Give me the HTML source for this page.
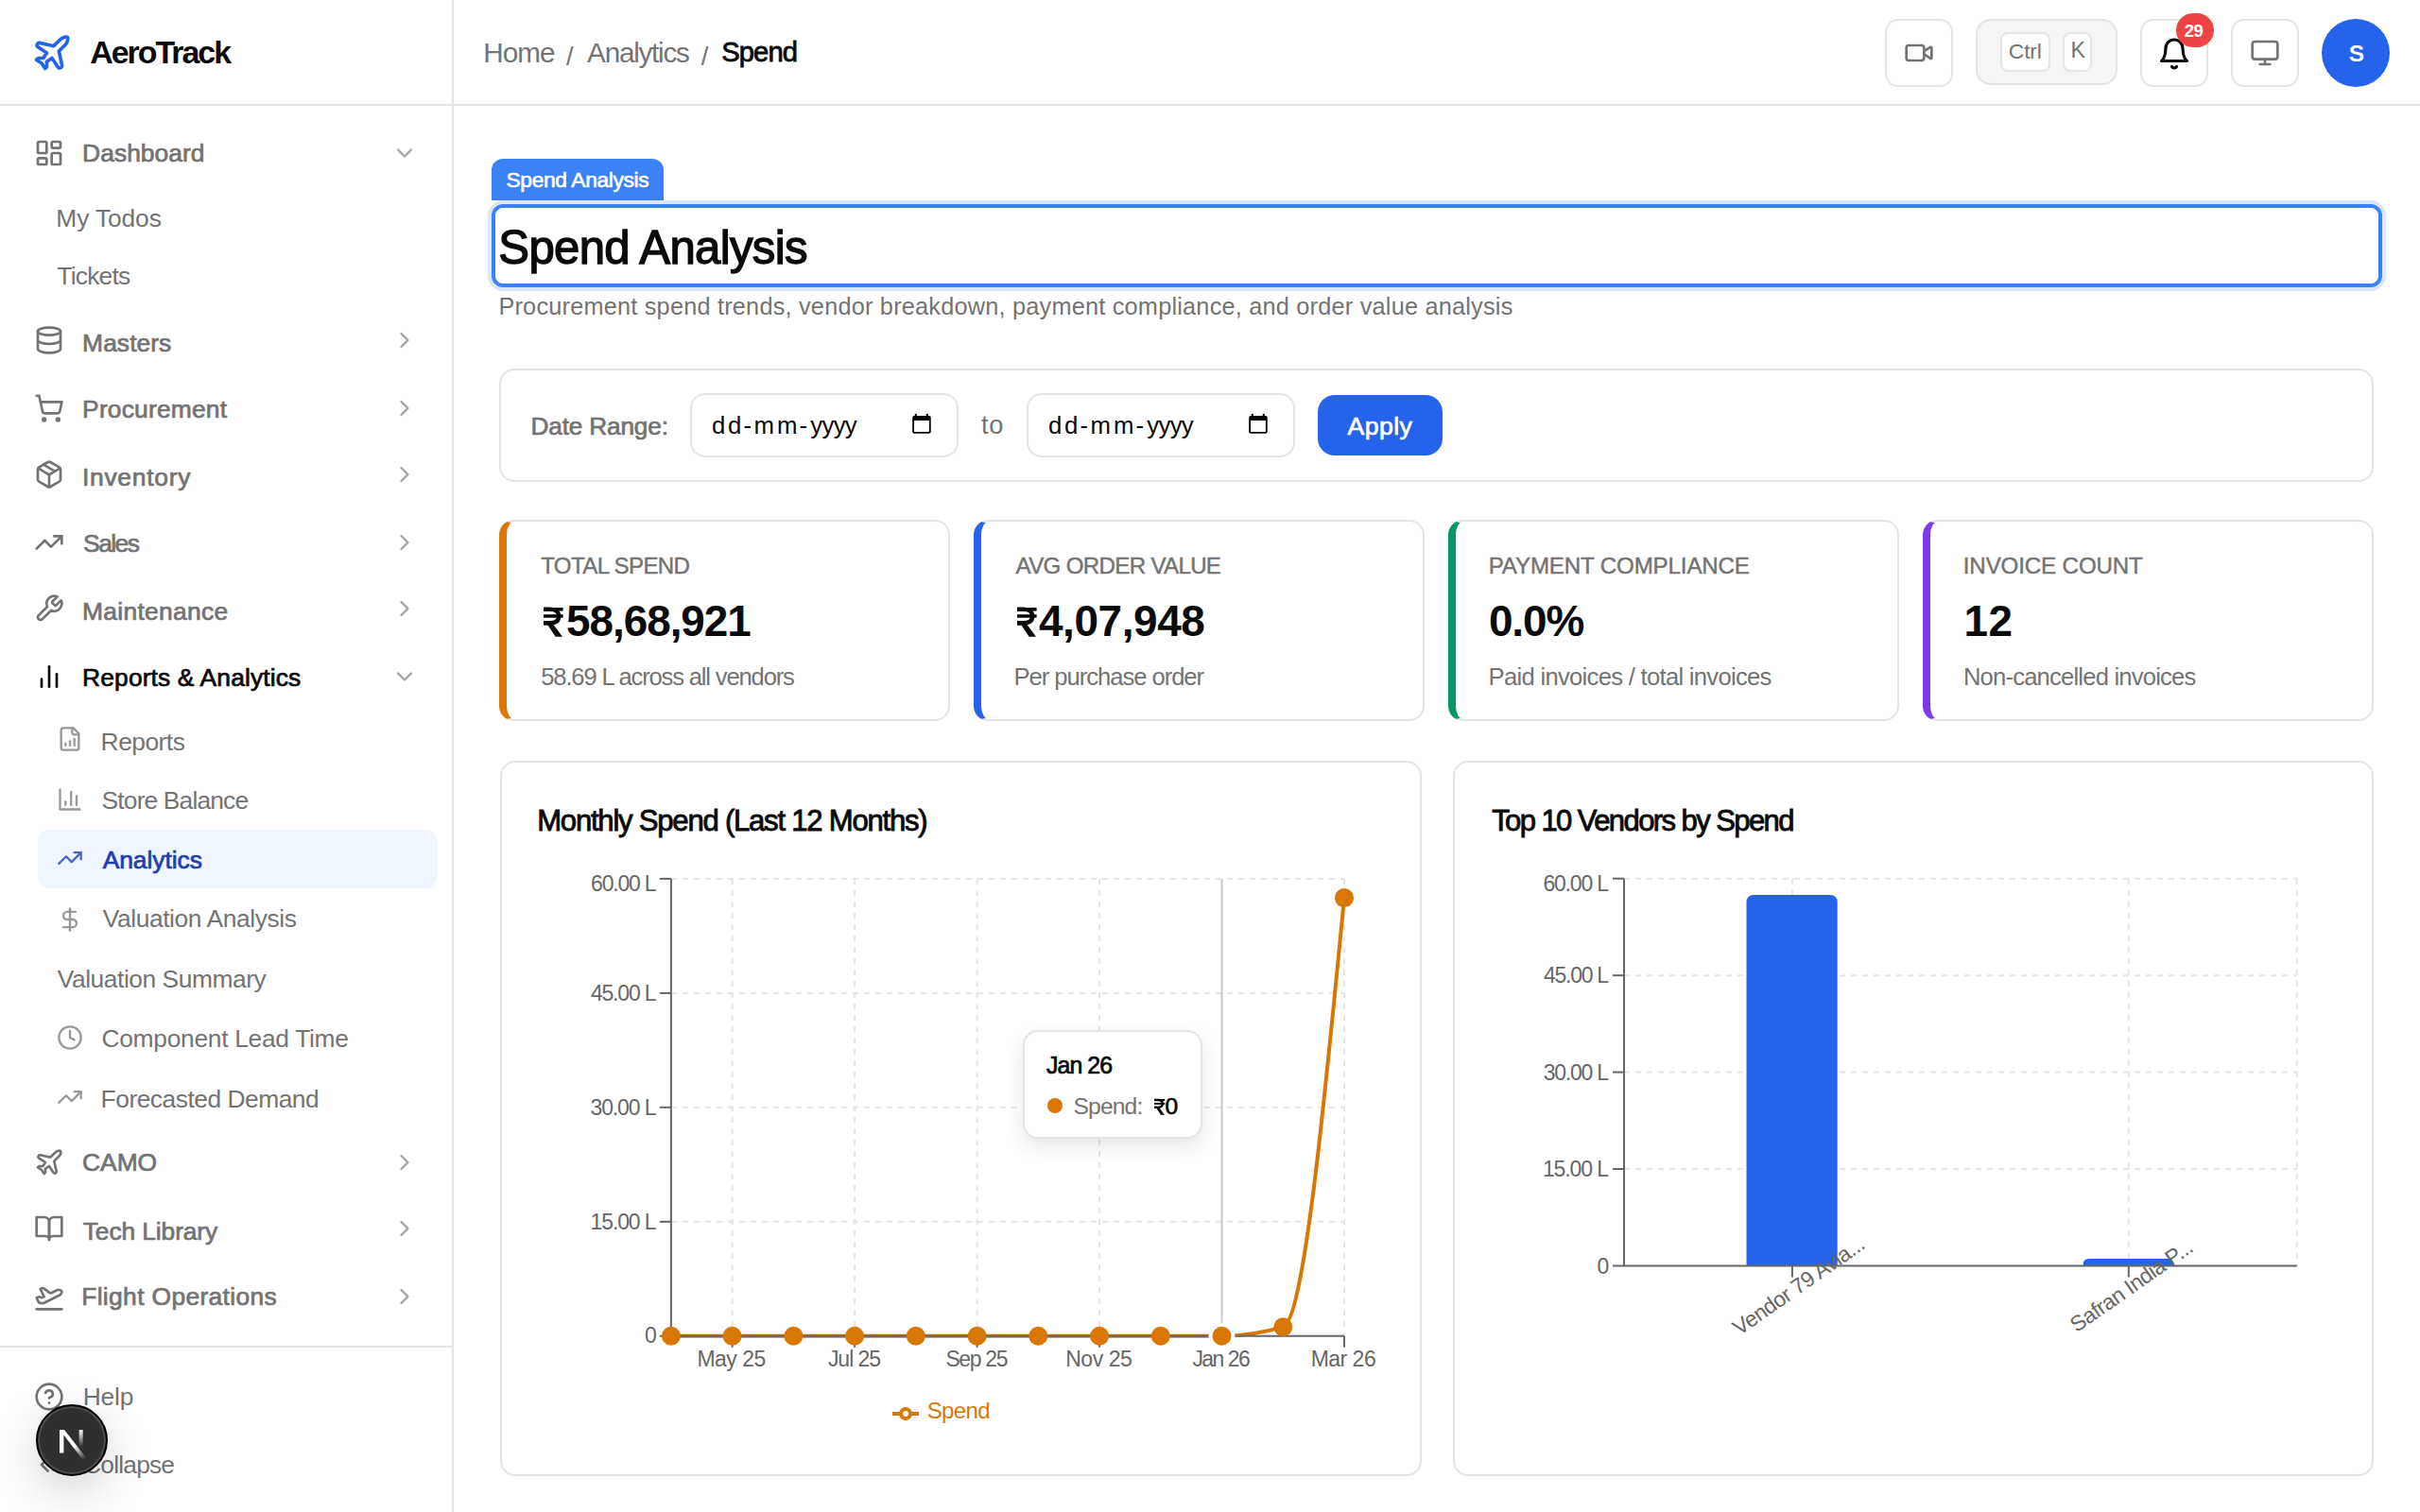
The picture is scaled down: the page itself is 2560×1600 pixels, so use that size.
<!DOCTYPE html><html><head><meta charset="utf-8"><title>Spend Analysis</title><style>
html,body{margin:0;padding:0;background:#fff;}
body{width:2560px;height:1600px;position:relative;overflow:hidden;font-family:"Liberation Sans",sans-serif;}
.t{position:absolute;white-space:nowrap;}
svg{display:block}
</style></head><body>
<div style="position:absolute;left:478px;top:0px;width:2px;height:1600px;box-sizing:border-box;background:#e5e5e5"></div>
<div style="position:absolute;left:0px;top:110px;width:2560px;height:2px;box-sizing:border-box;background:#e5e5e5"></div>
<div style="position:absolute;left:0px;top:1424px;width:478px;height:2px;box-sizing:border-box;background:#e5e5e5"></div>
<svg style="position:absolute;left:32.5px;top:34.2px;" width="44" height="44" viewBox="0 0 24 24" fill="none" stroke="#2563eb" stroke-width="2" stroke-linecap="round" stroke-linejoin="round"><path d="M17.8 19.2 16 11l3.5-3.5C21 6 21.5 4 21 3c-1-.5-3 0-4.5 1.5L13 8 4.8 6.2c-.5-.1-.9.1-1.1.5l-.3.5c-.2.5-.1 1 .3 1.3L9 12l-2 3H4l-1 1 3 2 2 3 1-1v-3l3-2 3.5 5.3c.3.4.8.5 1.3.3l.5-.2c.4-.3.6-.7.5-1.2z"/></svg>
<div class="t" style="left:95.2px;top:39.3px;font-size:33.9px;line-height:33.9px;letter-spacing:-1.99px;color:#0a0a0a;font-weight:700;">AeroTrack</div>
<div class="t" style="left:511.3px;top:40.9px;font-size:29.7px;line-height:29.7px;letter-spacing:-1.01px;color:#737373;">Home</div>
<div class="t" style="left:598.9px;top:46.0px;font-size:27.2px;line-height:27.2px;letter-spacing:0.00px;color:#737373;">/</div>
<div class="t" style="left:621.1px;top:40.9px;font-size:29.7px;line-height:29.7px;letter-spacing:-1.25px;color:#737373;">Analytics</div>
<div class="t" style="left:741.7px;top:46.0px;font-size:27.2px;line-height:27.2px;letter-spacing:0.00px;color:#737373;">/</div>
<div class="t" style="left:763.2px;top:41.3px;font-size:29.2px;line-height:29.2px;letter-spacing:-0.90px;color:#0a0a0a;-webkit-text-stroke:0.82px #0a0a0a;">Spend</div>
<div style="position:absolute;left:1994px;top:20px;width:72px;height:72px;box-sizing:border-box;border:2px solid #e5e5e5;border-radius:14px;background:#fff"></div>
<svg style="position:absolute;left:2014px;top:40px;" width="32" height="32" viewBox="0 0 24 24" fill="none" stroke="#737373" stroke-width="2" stroke-linecap="round" stroke-linejoin="round"><path d="m16 13 5.223 3.482a.5.5 0 0 0 .777-.416V7.87a.5.5 0 0 0-.752-.432L16 10.5"/><rect x="2" y="6" width="14" height="12" rx="2"/></svg>
<div style="position:absolute;left:2090px;top:20px;width:150px;height:70px;box-sizing:border-box;border:2px solid #e5e5e5;border-radius:16px;background:#f5f5f5"></div>
<div style="position:absolute;left:2116px;top:34px;width:53px;height:42px;box-sizing:border-box;border:2px solid #e5e5e5;border-radius:8px;background:#fff"></div>
<div style="position:absolute;left:2182px;top:34px;width:31px;height:42px;box-sizing:border-box;border:2px solid #e5e5e5;border-radius:8px;background:#fff"></div>
<div class="t" style="left:2124.8px;top:42.5px;font-size:22.9px;line-height:22.9px;letter-spacing:-0.20px;color:#737373;">Ctrl</div>
<div class="t" style="left:2190.6px;top:42.2px;font-size:23.3px;line-height:23.3px;letter-spacing:0.00px;color:#737373;">K</div>
<div style="position:absolute;left:2264px;top:20px;width:72px;height:72px;box-sizing:border-box;border:2px solid #e5e5e5;border-radius:14px;background:#fff"></div>
<svg style="position:absolute;left:2282px;top:38.5px;" width="36" height="36" viewBox="0 0 24 24" fill="none" stroke="#0a0a0a" stroke-width="2.1" stroke-linecap="round" stroke-linejoin="round"><path d="M6 8a6 6 0 0 1 12 0c0 7 3 9 3 9H3s3-2 3-9"/><path d="M10.3 21a1.94 1.94 0 0 0 3.4 0"/></svg>
<div style="position:absolute;left:2302px;top:14px;width:40px;height:36px;box-sizing:border-box;background:#ef4444;border-radius:18px"></div>
<div class="t" style="left:2310.8px;top:24.1px;font-size:18.5px;line-height:18.5px;letter-spacing:-0.50px;color:#fff;font-weight:700;">29</div>
<div style="position:absolute;left:2360px;top:20px;width:72px;height:72px;box-sizing:border-box;border:2px solid #e5e5e5;border-radius:14px;background:#fff"></div>
<svg style="position:absolute;left:2380px;top:40px;" width="32" height="32" viewBox="0 0 24 24" fill="none" stroke="#737373" stroke-width="2" stroke-linecap="round" stroke-linejoin="round"><rect width="20" height="14" x="2" y="3" rx="2"/><line x1="8" x2="16" y1="21" y2="21"/><line x1="12" x2="12" y1="17" y2="21"/></svg>
<div style="position:absolute;left:2456px;top:20px;width:72px;height:72px;box-sizing:border-box;background:#2563eb;border-radius:50%"></div>
<div class="t" style="left:2484.8px;top:45.0px;font-size:24.5px;line-height:24.5px;letter-spacing:0.00px;color:#fff;font-weight:700;">S</div>
<svg style="position:absolute;left:36px;top:145.9px;" width="32" height="32" viewBox="0 0 24 24" fill="none" stroke="#737373" stroke-width="2" stroke-linecap="round" stroke-linejoin="round"><rect width="7" height="9" x="3" y="3" rx="1"/><rect width="7" height="5" x="14" y="3" rx="1"/><rect width="7" height="9" x="14" y="12" rx="1"/><rect width="7" height="5" x="3" y="16" rx="1"/></svg>
<div class="t" style="left:87.1px;top:149.4px;font-size:26.4px;line-height:26.4px;letter-spacing:0.04px;color:#737373;-webkit-text-stroke:0.74px #737373;">Dashboard</div>
<svg style="position:absolute;left:414px;top:147.9px;" width="28" height="28" viewBox="0 0 24 24" fill="none" stroke="#a3a3a3" stroke-width="2" stroke-linecap="round" stroke-linejoin="round"><path d="m6 9 6 6 6-6"/></svg>
<div class="t" style="left:59.3px;top:217.6px;font-size:26.4px;line-height:26.4px;letter-spacing:-0.13px;color:#737373;">My Todos</div>
<div class="t" style="left:60.3px;top:279.1px;font-size:26.4px;line-height:26.4px;letter-spacing:-0.78px;color:#737373;">Tickets</div>
<svg style="position:absolute;left:36px;top:343.9px;" width="32" height="32" viewBox="0 0 24 24" fill="none" stroke="#737373" stroke-width="2" stroke-linecap="round" stroke-linejoin="round"><ellipse cx="12" cy="5" rx="9" ry="3"/><path d="M3 5V19A9 3 0 0 0 21 19V5"/><path d="M3 12A9 3 0 0 0 21 12"/></svg>
<div class="t" style="left:87.1px;top:349.8px;font-size:26.4px;line-height:26.4px;letter-spacing:0.06px;color:#737373;-webkit-text-stroke:0.74px #737373;">Masters</div>
<svg style="position:absolute;left:414px;top:345.9px;" width="28" height="28" viewBox="0 0 24 24" fill="none" stroke="#a3a3a3" stroke-width="2" stroke-linecap="round" stroke-linejoin="round"><path d="m9 18 6-6-6-6"/></svg>
<svg style="position:absolute;left:36px;top:416.3px;" width="32" height="32" viewBox="0 0 24 24" fill="none" stroke="#737373" stroke-width="2" stroke-linecap="round" stroke-linejoin="round"><circle cx="8" cy="21" r="1"/><circle cx="19" cy="21" r="1"/><path d="M2.05 2.05h2l2.66 12.42a2 2 0 0 0 2 1.58h9.78a2 2 0 0 0 1.95-1.57l1.65-7.43H5.12"/></svg>
<div class="t" style="left:87.1px;top:419.8px;font-size:26.4px;line-height:26.4px;letter-spacing:0.19px;color:#737373;-webkit-text-stroke:0.74px #737373;">Procurement</div>
<svg style="position:absolute;left:414px;top:418.3px;" width="28" height="28" viewBox="0 0 24 24" fill="none" stroke="#a3a3a3" stroke-width="2" stroke-linecap="round" stroke-linejoin="round"><path d="m9 18 6-6-6-6"/></svg>
<svg style="position:absolute;left:36px;top:485.8px;" width="32" height="32" viewBox="0 0 24 24" fill="none" stroke="#737373" stroke-width="2" stroke-linecap="round" stroke-linejoin="round"><path d="M11 21.73a2 2 0 0 0 2 0l7-4A2 2 0 0 0 21 16V8a2 2 0 0 0-1-1.73l-7-4a2 2 0 0 0-2 0l-7 4A2 2 0 0 0 3 8v8a2 2 0 0 0 1 1.73z"/><path d="M12 22V12"/><path d="m3.3 7 7.703 4.734a2 2 0 0 0 1.994 0L20.7 7"/><path d="m7.5 4.27 9 5.15"/></svg>
<div class="t" style="left:86.9px;top:491.7px;font-size:26.4px;line-height:26.4px;letter-spacing:0.75px;color:#737373;-webkit-text-stroke:0.74px #737373;">Inventory</div>
<svg style="position:absolute;left:414px;top:487.8px;" width="28" height="28" viewBox="0 0 24 24" fill="none" stroke="#a3a3a3" stroke-width="2" stroke-linecap="round" stroke-linejoin="round"><path d="m9 18 6-6-6-6"/></svg>
<svg style="position:absolute;left:36px;top:558.2px;" width="32" height="32" viewBox="0 0 24 24" fill="none" stroke="#737373" stroke-width="2" stroke-linecap="round" stroke-linejoin="round"><polyline points="22 7 13.5 15.5 8.5 10.5 2 17"/><polyline points="16 7 22 7 22 13"/></svg>
<div class="t" style="left:88.1px;top:561.9px;font-size:26.4px;line-height:26.4px;letter-spacing:-1.57px;color:#737373;-webkit-text-stroke:0.74px #737373;">Sales</div>
<svg style="position:absolute;left:414px;top:560.2px;" width="28" height="28" viewBox="0 0 24 24" fill="none" stroke="#a3a3a3" stroke-width="2" stroke-linecap="round" stroke-linejoin="round"><path d="m9 18 6-6-6-6"/></svg>
<svg style="position:absolute;left:36px;top:627.5px;" width="32" height="32" viewBox="0 0 24 24" fill="none" stroke="#737373" stroke-width="2" stroke-linecap="round" stroke-linejoin="round"><path d="M14.7 6.3a1 1 0 0 0 0 1.4l1.6 1.6a1 1 0 0 0 1.4 0l3.77-3.77a6 6 0 0 1-7.94 7.94l-6.91 6.91a2.12 2.12 0 0 1-3-3l6.91-6.91a6 6 0 0 1 7.94-7.94l-3.76 3.76z"/></svg>
<div class="t" style="left:87.1px;top:634.1px;font-size:26.4px;line-height:26.4px;letter-spacing:0.29px;color:#737373;-webkit-text-stroke:0.74px #737373;">Maintenance</div>
<svg style="position:absolute;left:414px;top:629.5px;" width="28" height="28" viewBox="0 0 24 24" fill="none" stroke="#a3a3a3" stroke-width="2" stroke-linecap="round" stroke-linejoin="round"><path d="m9 18 6-6-6-6"/></svg>
<svg style="position:absolute;left:36px;top:700.1px;" width="32" height="32" viewBox="0 0 24 24" fill="none" stroke="#0a0a0a" stroke-width="2" stroke-linecap="round" stroke-linejoin="round"><line x1="18" x2="18" y1="20" y2="10"/><line x1="12" x2="12" y1="20" y2="4"/><line x1="6" x2="6" y1="20" y2="14"/></svg>
<div class="t" style="left:87.1px;top:704.2px;font-size:26.4px;line-height:26.4px;letter-spacing:0.13px;color:#0a0a0a;-webkit-text-stroke:0.74px #0a0a0a;">Reports &amp; Analytics</div>
<svg style="position:absolute;left:414px;top:702.1px;" width="28" height="28" viewBox="0 0 24 24" fill="none" stroke="#a3a3a3" stroke-width="2" stroke-linecap="round" stroke-linejoin="round"><path d="m6 9 6 6 6-6"/></svg>
<svg style="position:absolute;left:60px;top:767.8px;" width="28" height="28" viewBox="0 0 24 24" fill="none" stroke="#999999" stroke-width="2" stroke-linecap="round" stroke-linejoin="round"><path d="M15 2H6a2 2 0 0 0-2 2v16a2 2 0 0 0 2 2h12a2 2 0 0 0 2-2V7Z"/><path d="M14 2v4a2 2 0 0 0 2 2h4"/><path d="M8 18v-2"/><path d="M12 18v-4"/><path d="M16 18v-6"/></svg>
<div class="t" style="left:106.6px;top:772.0px;font-size:26.4px;line-height:26.4px;letter-spacing:-0.52px;color:#737373;">Reports</div>
<svg style="position:absolute;left:60px;top:832.3px;" width="28" height="28" viewBox="0 0 24 24" fill="none" stroke="#999999" stroke-width="2" stroke-linecap="round" stroke-linejoin="round"><path d="M3 3v18h18"/><path d="M18 17V9"/><path d="M13 17V5"/><path d="M8 17v-3"/></svg>
<div class="t" style="left:107.6px;top:833.6px;font-size:26.4px;line-height:26.4px;letter-spacing:-0.86px;color:#737373;">Store Balance</div>
<div style="position:absolute;left:40px;top:878px;width:422px;height:62px;box-sizing:border-box;background:#eff6ff;border-radius:12px"></div>
<svg style="position:absolute;left:60px;top:893.9px;" width="28" height="28" viewBox="0 0 24 24" fill="none" stroke="#4666cc" stroke-width="2" stroke-linecap="round" stroke-linejoin="round"><polyline points="22 7 13.5 15.5 8.5 10.5 2 17"/><polyline points="16 7 22 7 22 13"/></svg>
<div class="t" style="left:108.7px;top:897.4px;font-size:26.4px;line-height:26.4px;letter-spacing:-0.05px;color:#1e40af;-webkit-text-stroke:0.74px #1e40af;">Analytics</div>
<svg style="position:absolute;left:60px;top:959px;" width="28" height="28" viewBox="0 0 24 24" fill="none" stroke="#999999" stroke-width="2" stroke-linecap="round" stroke-linejoin="round"><line x1="12" x2="12" y1="2" y2="22"/><path d="M17 5H9.5a3.5 3.5 0 0 0 0 7h5a3.5 3.5 0 0 1 0 7H6"/></svg>
<div class="t" style="left:108.7px;top:959.3px;font-size:26.4px;line-height:26.4px;letter-spacing:-0.41px;color:#737373;">Valuation Analysis</div>
<div class="t" style="left:60.8px;top:1023.4px;font-size:26.4px;line-height:26.4px;letter-spacing:-0.46px;color:#737373;">Valuation Summary</div>
<svg style="position:absolute;left:60px;top:1083.8px;" width="28" height="28" viewBox="0 0 24 24" fill="none" stroke="#999999" stroke-width="2" stroke-linecap="round" stroke-linejoin="round"><circle cx="12" cy="12" r="10"/><polyline points="12 6 12 12 16 14"/></svg>
<div class="t" style="left:107.5px;top:1085.6px;font-size:26.4px;line-height:26.4px;letter-spacing:-0.31px;color:#737373;">Component Lead Time</div>
<svg style="position:absolute;left:60px;top:1146.9px;" width="28" height="28" viewBox="0 0 24 24" fill="none" stroke="#999999" stroke-width="2" stroke-linecap="round" stroke-linejoin="round"><polyline points="22 7 13.5 15.5 8.5 10.5 2 17"/><polyline points="16 7 22 7 22 13"/></svg>
<div class="t" style="left:106.6px;top:1149.6px;font-size:26.4px;line-height:26.4px;letter-spacing:-0.50px;color:#737373;">Forecasted Demand</div>
<svg style="position:absolute;left:36px;top:1213.7px;" width="32" height="32" viewBox="0 0 24 24" fill="none" stroke="#737373" stroke-width="2" stroke-linecap="round" stroke-linejoin="round"><path d="M17.8 19.2 16 11l3.5-3.5C21 6 21.5 4 21 3c-1-.5-3 0-4.5 1.5L13 8 4.8 6.2c-.5-.1-.9.1-1.1.5l-.3.5c-.2.5-.1 1 .3 1.3L9 12l-2 3H4l-1 1 3 2 2 3 1-1v-3l3-2 3.5 5.3c.3.4.8.5 1.3.3l.5-.2c.4-.3.6-.7.5-1.2z"/></svg>
<div class="t" style="left:87.1px;top:1217.4px;font-size:26.4px;line-height:26.4px;letter-spacing:-0.04px;color:#737373;-webkit-text-stroke:0.74px #737373;">CAMO</div>
<svg style="position:absolute;left:414px;top:1215.7px;" width="28" height="28" viewBox="0 0 24 24" fill="none" stroke="#a3a3a3" stroke-width="2" stroke-linecap="round" stroke-linejoin="round"><path d="m9 18 6-6-6-6"/></svg>
<svg style="position:absolute;left:36px;top:1284.1px;" width="32" height="32" viewBox="0 0 24 24" fill="none" stroke="#737373" stroke-width="2" stroke-linecap="round" stroke-linejoin="round"><path d="M2 3h6a4 4 0 0 1 4 4v14a3 3 0 0 0-3-3H2z"/><path d="M22 3h-6a4 4 0 0 0-4 4v14a3 3 0 0 1 3-3h7z"/></svg>
<div class="t" style="left:87.8px;top:1289.5px;font-size:26.4px;line-height:26.4px;letter-spacing:-0.12px;color:#737373;-webkit-text-stroke:0.74px #737373;">Tech Library</div>
<svg style="position:absolute;left:414px;top:1286.1px;" width="28" height="28" viewBox="0 0 24 24" fill="none" stroke="#a3a3a3" stroke-width="2" stroke-linecap="round" stroke-linejoin="round"><path d="m9 18 6-6-6-6"/></svg>
<svg style="position:absolute;left:36px;top:1356.2px;" width="32" height="32" viewBox="0 0 24 24" fill="none" stroke="#737373" stroke-width="2" stroke-linecap="round" stroke-linejoin="round"><path d="M2 22h20"/><path d="M6.36 17.4 4 17l-2-4 1.1-.55a2 2 0 0 1 1.8 0l.17.1a2 2 0 0 0 1.8 0L8 12 5 6l.9-.45a2 2 0 0 1 2.09.2l4.02 3a2 2 0 0 0 2.1.2l4.19-2.06a2.41 2.41 0 0 1 1.73-.17L21 7a1.4 1.4 0 0 1 .87 1.99l-.38.76c-.23.46-.6.84-1.07 1.08L7.58 17.2a2 2 0 0 1-1.22.18Z"/></svg>
<div class="t" style="left:86.2px;top:1359.4px;font-size:26.4px;line-height:26.4px;letter-spacing:0.35px;color:#737373;-webkit-text-stroke:0.74px #737373;">Flight Operations</div>
<svg style="position:absolute;left:414px;top:1358.2px;" width="28" height="28" viewBox="0 0 24 24" fill="none" stroke="#a3a3a3" stroke-width="2" stroke-linecap="round" stroke-linejoin="round"><path d="m9 18 6-6-6-6"/></svg>
<svg style="position:absolute;left:36px;top:1461.9px;" width="32" height="32" viewBox="0 0 24 24" fill="none" stroke="#737373" stroke-width="2" stroke-linecap="round" stroke-linejoin="round"><circle cx="12" cy="12" r="10"/><path d="M9.09 9a3 3 0 0 1 5.83 1c0 2-3 3-3 3"/><path d="M12 17h.01"/></svg>
<div class="t" style="left:87.7px;top:1465.4px;font-size:26.4px;line-height:26.4px;letter-spacing:-0.19px;color:#737373;">Help</div>
<svg style="position:absolute;left:36px;top:1533.5px;" width="32" height="32" viewBox="0 0 24 24" fill="none" stroke="#737373" stroke-width="2" stroke-linecap="round" stroke-linejoin="round"><path d="m11 17-5-5 5-5"/><path d="m18 17-5-5 5-5"/></svg>
<div class="t" style="left:88.1px;top:1537.3px;font-size:26.4px;line-height:26.4px;letter-spacing:-0.82px;color:#737373;">Collapse</div>
<div style="position:absolute;left:38px;top:1486px;width:76px;height:76px;border-radius:50%;background:#2f2f2f;border:2px solid #000;box-sizing:border-box;box-shadow:0 0 0 2px rgba(255,255,255,0.15) inset,0 16px 48px rgba(0,0,0,0.18)"></div>
<svg style="position:absolute;left:45.4px;top:1494.9px" width="60.5" height="60.5" viewBox="0 0 180 180"><defs><linearGradient id="ng1" x1="100" y1="104" x2="134" y2="146" gradientUnits="userSpaceOnUse"><stop stop-color="#fff"/><stop offset="1" stop-color="#fff" stop-opacity="0"/></linearGradient><linearGradient id="ng2" x1="121" y1="54" x2="120.8" y2="106.9" gradientUnits="userSpaceOnUse"><stop stop-color="#fff"/><stop offset="1" stop-color="#fff" stop-opacity="0"/></linearGradient><clipPath id="nc"><circle cx="90" cy="90" r="88"/></clipPath></defs><g clip-path="url(#nc)"><path d="M149.508 157.52L69.142 54H54V125.97H66.1136V69.3836L139.999 164.845C143.333 162.614 146.509 160.165 149.508 157.52Z" fill="url(#ng1)"/><rect x="54" y="54" width="12.1" height="72" fill="#fff"/><rect x="115" y="54" width="12" height="72" fill="url(#ng2)"/></g></svg>
<div style="position:absolute;left:520px;top:168px;width:182px;height:44px;background:#3b82f6;border-radius:12px 12px 0 0"></div>
<div class="t" style="left:535.5px;top:178.6px;font-size:22.8px;line-height:22.8px;letter-spacing:-0.36px;color:#fff;-webkit-text-stroke:0.64px #fff;">Spend Analysis</div>
<div style="position:absolute;left:516px;top:212px;width:2008px;height:96px;box-sizing:border-box;border:4px solid #dbe7fd;border-radius:16px"></div>
<div style="position:absolute;left:520px;top:216px;width:2000px;height:88px;box-sizing:border-box;border:4px solid #3b82f6;border-radius:12px;background:#fff"></div>
<div class="t" style="left:527.3px;top:238.2px;font-size:49.1px;line-height:49.1px;letter-spacing:-0.65px;color:#0a0a0a;-webkit-text-stroke:1.38px #0a0a0a;">Spend Analysis</div>
<div class="t" style="left:527.4px;top:311.9px;font-size:25.3px;line-height:25.3px;letter-spacing:0.21px;color:#737373;">Procurement spend trends, vendor breakdown, payment compliance, and order value analysis</div>
<div style="position:absolute;left:528px;top:390px;width:1983px;height:120px;box-sizing:border-box;border:2px solid #e5e5e5;border-radius:16px;background:#fff"></div>
<div class="t" style="left:561.5px;top:437.7px;font-size:26.2px;line-height:26.2px;letter-spacing:-0.16px;color:#737373;-webkit-text-stroke:0.73px #737373;">Date Range:</div>
<div style="position:absolute;left:730px;top:416px;width:284px;height:68px;box-sizing:border-box;border:2px solid #e5e5e5;border-radius:16px;background:#fff"></div>
<div style="position:absolute;left:1086px;top:416px;width:284px;height:68px;box-sizing:border-box;border:2px solid #e5e5e5;border-radius:16px;background:#fff"></div>
<div class="t" style="left:753.1px;top:438.1px;font-size:25.8px;line-height:25.8px;letter-spacing:2.45px;color:#0a0a0a;">dd</div>
<div class="t" style="left:786.4px;top:438.1px;font-size:25.8px;line-height:25.8px;letter-spacing:0.00px;color:#0a0a0a;">-</div>
<div class="t" style="left:797.6px;top:438.1px;font-size:25.8px;line-height:25.8px;letter-spacing:2.80px;color:#0a0a0a;">mm</div>
<div class="t" style="left:845.5px;top:438.1px;font-size:25.8px;line-height:25.8px;letter-spacing:0.00px;color:#0a0a0a;">-</div>
<div class="t" style="left:857.2px;top:438.1px;font-size:25.8px;line-height:25.8px;letter-spacing:-0.67px;color:#0a0a0a;">yyyy</div>
<svg style="position:absolute;left:965.2px;top:437.0px" width="20" height="22" viewBox="0 0 20 22"><path d="M2.2 2.9H17.5A2 2 0 0 1 19.7 5V19.8A2 2 0 0 1 17.7 21.8H2.2A2 2 0 0 1 0.2 19.8V5A2 2 0 0 1 2.2 2.9Z M2 7.9V19.9H17.9V7.9Z" fill="#000" fill-rule="evenodd"/><rect x="2.8" y="0.9" width="2" height="3" fill="#000"/><rect x="14.8" y="0.9" width="2" height="3" fill="#000"/></svg>
<div class="t" style="left:1109.1px;top:438.1px;font-size:25.8px;line-height:25.8px;letter-spacing:2.45px;color:#0a0a0a;">dd</div>
<div class="t" style="left:1142.4px;top:438.1px;font-size:25.8px;line-height:25.8px;letter-spacing:0.00px;color:#0a0a0a;">-</div>
<div class="t" style="left:1153.6px;top:438.1px;font-size:25.8px;line-height:25.8px;letter-spacing:2.80px;color:#0a0a0a;">mm</div>
<div class="t" style="left:1201.5px;top:438.1px;font-size:25.8px;line-height:25.8px;letter-spacing:0.00px;color:#0a0a0a;">-</div>
<div class="t" style="left:1213.2px;top:438.1px;font-size:25.8px;line-height:25.8px;letter-spacing:-0.67px;color:#0a0a0a;">yyyy</div>
<svg style="position:absolute;left:1321.2px;top:437.0px" width="20" height="22" viewBox="0 0 20 22"><path d="M2.2 2.9H17.5A2 2 0 0 1 19.7 5V19.8A2 2 0 0 1 17.7 21.8H2.2A2 2 0 0 1 0.2 19.8V5A2 2 0 0 1 2.2 2.9Z M2 7.9V19.9H17.9V7.9Z" fill="#000" fill-rule="evenodd"/><rect x="2.8" y="0.9" width="2" height="3" fill="#000"/><rect x="14.8" y="0.9" width="2" height="3" fill="#000"/></svg>
<div class="t" style="left:1037.9px;top:436.4px;font-size:27.2px;line-height:27.2px;letter-spacing:0.90px;color:#737373;">to</div>
<div style="position:absolute;left:1394px;top:418px;width:132px;height:64px;box-sizing:border-box;background:#2563eb;border-radius:18px"></div>
<div class="t" style="left:1425.6px;top:437.7px;font-size:26.6px;line-height:26.6px;letter-spacing:0.42px;color:#fff;-webkit-text-stroke:0.74px #fff;">Apply</div>
<div style="position:absolute;left:528px;top:550px;width:477px;height:213px;box-sizing:border-box;border:2px solid #e5e5e5;border-left:8px solid #d97706;border-radius:16px;background:#fff"></div>
<div class="t" style="left:572.2px;top:587.4px;font-size:24.1px;line-height:24.1px;letter-spacing:-0.64px;color:#737373;-webkit-text-stroke:0.43px #737373;">TOTAL SPEND</div>
<svg style="position:absolute;left:574.8px;top:643.1px;overflow:visible" width="20.60" height="30.70" viewBox="0 0 20.6 30.7" fill="#0a0a0a"><rect x="0" y="0" width="20.6" height="3.6"/><rect x="0" y="7.2" width="20.6" height="3.5"/><path d="M0 1.8H7C13 1.8 16.2 5 16.2 9.2C16.2 13.8 12.5 16.3 6 16.3H0" stroke="#0a0a0a" stroke-width="4.4" fill="none"/><polygon points="0,14.1 5,14.1 9.8,17 20,30.7 12.6,30.7 4.5,18.5 0,18.5"/></svg>
<div class="t" style="left:599.0px;top:635.4px;font-size:45.9px;line-height:45.9px;letter-spacing:-1.04px;color:#0a0a0a;font-weight:700;">58,68,921</div>
<div class="t" style="left:572.3px;top:704.3px;font-size:25.6px;line-height:25.6px;letter-spacing:-1.17px;color:#737373;">58.69 L across all vendors</div>
<div style="position:absolute;left:1030px;top:550px;width:477px;height:213px;box-sizing:border-box;border:2px solid #e5e5e5;border-left:8px solid #2563eb;border-radius:16px;background:#fff"></div>
<div class="t" style="left:1074.6px;top:587.4px;font-size:24.1px;line-height:24.1px;letter-spacing:-0.67px;color:#737373;-webkit-text-stroke:0.43px #737373;">AVG ORDER VALUE</div>
<svg style="position:absolute;left:1076.3px;top:643.1px;overflow:visible" width="20.60" height="30.70" viewBox="0 0 20.6 30.7" fill="#0a0a0a"><rect x="0" y="0" width="20.6" height="3.6"/><rect x="0" y="7.2" width="20.6" height="3.5"/><path d="M0 1.8H7C13 1.8 16.2 5 16.2 9.2C16.2 13.8 12.5 16.3 6 16.3H0" stroke="#0a0a0a" stroke-width="4.4" fill="none"/><polygon points="0,14.1 5,14.1 9.8,17 20,30.7 12.6,30.7 4.5,18.5 0,18.5"/></svg>
<div class="t" style="left:1098.9px;top:635.4px;font-size:45.9px;line-height:45.9px;letter-spacing:-0.38px;color:#0a0a0a;font-weight:700;">4,07,948</div>
<div class="t" style="left:1072.5px;top:704.3px;font-size:25.6px;line-height:25.6px;letter-spacing:-1.03px;color:#737373;">Per purchase order</div>
<div style="position:absolute;left:1532px;top:550px;width:477px;height:213px;box-sizing:border-box;border:2px solid #e5e5e5;border-left:8px solid #059669;border-radius:16px;background:#fff"></div>
<div class="t" style="left:1574.7px;top:587.4px;font-size:24.1px;line-height:24.1px;letter-spacing:-0.13px;color:#737373;-webkit-text-stroke:0.43px #737373;">PAYMENT COMPLIANCE</div>
<div class="t" style="left:1574.9px;top:635.4px;font-size:45.9px;line-height:45.9px;letter-spacing:-1.04px;color:#0a0a0a;font-weight:700;">0.0%</div>
<div class="t" style="left:1574.6px;top:704.3px;font-size:25.6px;line-height:25.6px;letter-spacing:-0.70px;color:#737373;">Paid invoices / total invoices</div>
<div style="position:absolute;left:2034px;top:550px;width:477px;height:213px;box-sizing:border-box;border:2px solid #e5e5e5;border-left:8px solid #7c3aed;border-radius:16px;background:#fff"></div>
<div class="t" style="left:2076.8px;top:587.4px;font-size:24.1px;line-height:24.1px;letter-spacing:-0.12px;color:#737373;-webkit-text-stroke:0.43px #737373;">INVOICE COUNT</div>
<div class="t" style="left:2077.6px;top:635.4px;font-size:45.9px;line-height:45.9px;letter-spacing:0.40px;color:#0a0a0a;font-weight:700;">12</div>
<div class="t" style="left:2076.9px;top:704.3px;font-size:25.6px;line-height:25.6px;letter-spacing:-0.80px;color:#737373;">Non-cancelled invoices</div>
<div style="position:absolute;left:529px;top:805px;width:975px;height:757px;box-sizing:border-box;border:2px solid #e5e5e5;border-radius:16px;background:#fff"></div>
<div style="position:absolute;left:1537px;top:805px;width:974px;height:757px;box-sizing:border-box;border:2px solid #e5e5e5;border-radius:16px;background:#fff"></div>
<div class="t" style="left:568.2px;top:852.5px;font-size:31.1px;line-height:31.1px;letter-spacing:-1.24px;color:#0a0a0a;-webkit-text-stroke:0.87px #0a0a0a;">Monthly Spend (Last 12 Months)</div>
<div class="t" style="left:1578.2px;top:852.6px;font-size:31.0px;line-height:31.0px;letter-spacing:-1.58px;color:#0a0a0a;-webkit-text-stroke:0.87px #0a0a0a;">Top 10 Vendors by Spend</div>
<svg style="position:absolute;left:0;top:0" width="2560" height="1600" viewBox="0 0 2560 1600"><line x1="709.9" y1="929.9" x2="1422.0" y2="929.9" stroke="#e5e5e5" stroke-width="2" stroke-dasharray="6 6"/><line x1="709.9" y1="1050.9" x2="1422.0" y2="1050.9" stroke="#e5e5e5" stroke-width="2" stroke-dasharray="6 6"/><line x1="709.9" y1="1171.8" x2="1422.0" y2="1171.8" stroke="#e5e5e5" stroke-width="2" stroke-dasharray="6 6"/><line x1="709.9" y1="1292.8" x2="1422.0" y2="1292.8" stroke="#e5e5e5" stroke-width="2" stroke-dasharray="6 6"/><line x1="774.6" y1="929.9" x2="774.6" y2="1413.8" stroke="#e5e5e5" stroke-width="2" stroke-dasharray="6 6"/><line x1="904.1" y1="929.9" x2="904.1" y2="1413.8" stroke="#e5e5e5" stroke-width="2" stroke-dasharray="6 6"/><line x1="1033.6" y1="929.9" x2="1033.6" y2="1413.8" stroke="#e5e5e5" stroke-width="2" stroke-dasharray="6 6"/><line x1="1163.1" y1="929.9" x2="1163.1" y2="1413.8" stroke="#e5e5e5" stroke-width="2" stroke-dasharray="6 6"/><line x1="1292.5" y1="929.9" x2="1292.5" y2="1413.8" stroke="#e5e5e5" stroke-width="2" stroke-dasharray="6 6"/><line x1="1422.0" y1="929.9" x2="1422.0" y2="1413.8" stroke="#e5e5e5" stroke-width="2" stroke-dasharray="6 6"/><line x1="1292.5" y1="929.9" x2="1292.5" y2="1413.8" stroke="#cccccc" stroke-width="2"/><path d="M709.90,1413.80C731.48,1413.80 753.06,1413.80 774.64,1413.80C796.22,1413.80 817.79,1413.80 839.37,1413.80C860.95,1413.80 882.53,1413.80 904.11,1413.80C925.69,1413.80 947.27,1413.80 968.85,1413.80C990.42,1413.80 1012.00,1413.80 1033.58,1413.80C1055.16,1413.80 1076.74,1413.80 1098.32,1413.80C1119.90,1413.80 1141.48,1413.80 1163.05,1413.80C1184.63,1413.80 1206.21,1413.80 1227.79,1413.80C1249.37,1413.80 1270.95,1413.80 1292.53,1413.80C1314.11,1413.80 1335.68,1410.60 1357.26,1404.20C1378.84,1397.80 1400.42,1173.93 1422.00,950.06" fill="none" stroke="#d97706" stroke-width="4"/><line x1="709.9" y1="929.9" x2="709.9" y2="1413.8" stroke="#666666" stroke-width="2"/><line x1="709.9" y1="1413.8" x2="1422.0" y2="1413.8" stroke="#666666" stroke-width="2"/><line x1="697.9" y1="929.9" x2="709.9" y2="929.9" stroke="#666666" stroke-width="2"/><line x1="697.9" y1="1050.9" x2="709.9" y2="1050.9" stroke="#666666" stroke-width="2"/><line x1="697.9" y1="1171.8" x2="709.9" y2="1171.8" stroke="#666666" stroke-width="2"/><line x1="697.9" y1="1292.8" x2="709.9" y2="1292.8" stroke="#666666" stroke-width="2"/><line x1="697.9" y1="1413.8" x2="709.9" y2="1413.8" stroke="#666666" stroke-width="2"/><line x1="774.6" y1="1413.8" x2="774.6" y2="1425.8" stroke="#666666" stroke-width="2"/><line x1="904.1" y1="1413.8" x2="904.1" y2="1425.8" stroke="#666666" stroke-width="2"/><line x1="1033.6" y1="1413.8" x2="1033.6" y2="1425.8" stroke="#666666" stroke-width="2"/><line x1="1163.1" y1="1413.8" x2="1163.1" y2="1425.8" stroke="#666666" stroke-width="2"/><line x1="1292.5" y1="1413.8" x2="1292.5" y2="1425.8" stroke="#666666" stroke-width="2"/><line x1="1422.0" y1="1413.8" x2="1422.0" y2="1425.8" stroke="#666666" stroke-width="2"/><circle cx="709.9" cy="1413.8" r="10" fill="#d97706"/><circle cx="774.6" cy="1413.8" r="10" fill="#d97706"/><circle cx="839.4" cy="1413.8" r="10" fill="#d97706"/><circle cx="904.1" cy="1413.8" r="10" fill="#d97706"/><circle cx="968.8" cy="1413.8" r="10" fill="#d97706"/><circle cx="1033.6" cy="1413.8" r="10" fill="#d97706"/><circle cx="1098.3" cy="1413.8" r="10" fill="#d97706"/><circle cx="1163.1" cy="1413.8" r="10" fill="#d97706"/><circle cx="1227.8" cy="1413.8" r="10" fill="#d97706"/><circle cx="1292.5" cy="1413.8" r="12" fill="#d97706" stroke="#fff" stroke-width="4"/><circle cx="1357.3" cy="1404.2" r="10" fill="#d97706"/><circle cx="1422.0" cy="950.1" r="10" fill="#d97706"/><line x1="944" y1="1496" x2="972" y2="1496" stroke="#d97706" stroke-width="4"/><circle cx="958" cy="1496" r="5" fill="#fff" stroke="#d97706" stroke-width="4"/><line x1="1718.0" y1="929.7" x2="2429.8" y2="929.7" stroke="#e5e5e5" stroke-width="2" stroke-dasharray="6 6"/><line x1="1718.0" y1="1032.2" x2="2429.8" y2="1032.2" stroke="#e5e5e5" stroke-width="2" stroke-dasharray="6 6"/><line x1="1718.0" y1="1134.6" x2="2429.8" y2="1134.6" stroke="#e5e5e5" stroke-width="2" stroke-dasharray="6 6"/><line x1="1718.0" y1="1237.0" x2="2429.8" y2="1237.0" stroke="#e5e5e5" stroke-width="2" stroke-dasharray="6 6"/><line x1="1895.9" y1="929.7" x2="1895.9" y2="1339.5" stroke="#e5e5e5" stroke-width="2" stroke-dasharray="6 6"/><line x1="2251.8" y1="929.7" x2="2251.8" y2="1339.5" stroke="#e5e5e5" stroke-width="2" stroke-dasharray="6 6"/><line x1="2429.8" y1="929.7" x2="2429.8" y2="1339.5" stroke="#e5e5e5" stroke-width="2" stroke-dasharray="6 6"/><path d="M1847.5,1339.5 V954.90 Q1847.5,946.90 1855.50,946.90 H1935.70 Q1943.7,946.90 1943.7,954.90 V1339.5 Z" fill="#2563eb"/><path d="M2203.7,1339.5 V1338.00 Q2203.7,1332.00 2209.70,1332.00 H2293.50 Q2299.5,1332.00 2299.5,1338.00 V1339.5 Z" fill="#2563eb"/><line x1="1718.0" y1="929.7" x2="1718.0" y2="1339.5" stroke="#666666" stroke-width="2"/><line x1="1718.0" y1="1339.5" x2="2429.8" y2="1339.5" stroke="#666666" stroke-width="2"/><line x1="1706.0" y1="929.7" x2="1718.0" y2="929.7" stroke="#666666" stroke-width="2"/><line x1="1706.0" y1="1032.2" x2="1718.0" y2="1032.2" stroke="#666666" stroke-width="2"/><line x1="1706.0" y1="1134.6" x2="1718.0" y2="1134.6" stroke="#666666" stroke-width="2"/><line x1="1706.0" y1="1237.0" x2="1718.0" y2="1237.0" stroke="#666666" stroke-width="2"/><line x1="1706.0" y1="1339.5" x2="1718.0" y2="1339.5" stroke="#666666" stroke-width="2"/><line x1="1895.9" y1="1339.5" x2="1895.9" y2="1351.5" stroke="#666666" stroke-width="2"/><line x1="2251.8" y1="1339.5" x2="2251.8" y2="1351.5" stroke="#666666" stroke-width="2"/><text x="1907" y="1367" transform="rotate(-35 1907 1367)" text-anchor="middle" font-family="Liberation Sans" font-size="23" fill="#666666" letter-spacing="-0.6">Vendor 79 Avia...</text><text x="2259" y="1367" transform="rotate(-35 2259 1367)" text-anchor="middle" font-family="Liberation Sans" font-size="23" fill="#666666" letter-spacing="-0.6">Safran India P...</text></svg>
<div class="t" style="left:625.1px;top:924.3px;font-size:23.0px;line-height:23.0px;letter-spacing:-1.22px;color:#666666;">60.00 L</div>
<div class="t" style="left:624.9px;top:1039.9px;font-size:23.0px;line-height:23.0px;letter-spacing:-1.18px;color:#666666;">45.00 L</div>
<div class="t" style="left:624.5px;top:1160.7px;font-size:23.0px;line-height:23.0px;letter-spacing:-1.12px;color:#666666;">30.00 L</div>
<div class="t" style="left:624.5px;top:1281.7px;font-size:23.0px;line-height:23.0px;letter-spacing:-1.10px;color:#666666;">15.00 L</div>
<div class="t" style="left:681.9px;top:1402.2px;font-size:23.0px;line-height:23.0px;letter-spacing:0.00px;color:#666666;">0</div>
<div class="t" style="left:737.5px;top:1426.8px;font-size:23.0px;line-height:23.0px;letter-spacing:-0.54px;color:#666666;">May 25</div>
<div class="t" style="left:875.9px;top:1426.8px;font-size:23.0px;line-height:23.0px;letter-spacing:-1.02px;color:#666666;">Jul 25</div>
<div class="t" style="left:1000.4px;top:1426.8px;font-size:23.0px;line-height:23.0px;letter-spacing:-1.36px;color:#666666;">Sep 25</div>
<div class="t" style="left:1127.2px;top:1426.8px;font-size:23.0px;line-height:23.0px;letter-spacing:-0.45px;color:#666666;">Nov 25</div>
<div class="t" style="left:1261.4px;top:1426.8px;font-size:23.0px;line-height:23.0px;letter-spacing:-1.54px;color:#666666;">Jan 26</div>
<div class="t" style="left:1386.7px;top:1426.8px;font-size:23.0px;line-height:23.0px;letter-spacing:-0.52px;color:#666666;">Mar 26</div>
<div class="t" style="left:980.7px;top:1481.4px;font-size:24.1px;line-height:24.1px;letter-spacing:-0.69px;color:#d97706;">Spend</div>
<div class="t" style="left:1632.4px;top:924.3px;font-size:23.0px;line-height:23.0px;letter-spacing:-1.19px;color:#666666;">60.00 L</div>
<div class="t" style="left:1633.1px;top:1020.6px;font-size:23.0px;line-height:23.0px;letter-spacing:-1.29px;color:#666666;">45.00 L</div>
<div class="t" style="left:1632.7px;top:1123.7px;font-size:23.0px;line-height:23.0px;letter-spacing:-1.23px;color:#666666;">30.00 L</div>
<div class="t" style="left:1631.9px;top:1225.9px;font-size:23.0px;line-height:23.0px;letter-spacing:-1.09px;color:#666666;">15.00 L</div>
<div class="t" style="left:1689.6px;top:1329.0px;font-size:23.0px;line-height:23.0px;letter-spacing:0.00px;color:#666666;">0</div>
<div style="position:absolute;left:1082px;top:1090px;width:190px;height:115px;box-sizing:border-box;border:2px solid #e5e5e5;border-radius:16px;background:#fff;box-shadow:0 8px 20px rgba(0,0,0,0.10)"></div>
<div class="t" style="left:1107.1px;top:1115.3px;font-size:24.9px;line-height:24.9px;letter-spacing:-0.95px;color:#0a0a0a;-webkit-text-stroke:0.70px #0a0a0a;">Jan 26</div>
<div style="position:absolute;left:1107.6px;top:1162px;width:16px;height:16px;border-radius:50%;background:#d97706"></div>
<div class="t" style="left:1135.5px;top:1159.1px;font-size:24.6px;line-height:24.6px;letter-spacing:-0.83px;color:#737373;">Spend:</div>
<svg style="position:absolute;left:1220.7px;top:1163.3px;overflow:visible" width="11.27" height="16.80" viewBox="0 0 20.6 30.7" fill="#0a0a0a"><rect x="0" y="0" width="20.6" height="3.6"/><rect x="0" y="7.2" width="20.6" height="3.5"/><path d="M0 1.8H7C13 1.8 16.2 5 16.2 9.2C16.2 13.8 12.5 16.3 6 16.3H0" stroke="#0a0a0a" stroke-width="4.4" fill="none"/><polygon points="0,14.1 5,14.1 9.8,17 20,30.7 12.6,30.7 4.5,18.5 0,18.5"/></svg>
<div class="t" style="left:1232.5px;top:1159.1px;font-size:24.6px;line-height:24.6px;letter-spacing:0.00px;color:#0a0a0a;-webkit-text-stroke:0.69px #0a0a0a;">0</div>
</body></html>
